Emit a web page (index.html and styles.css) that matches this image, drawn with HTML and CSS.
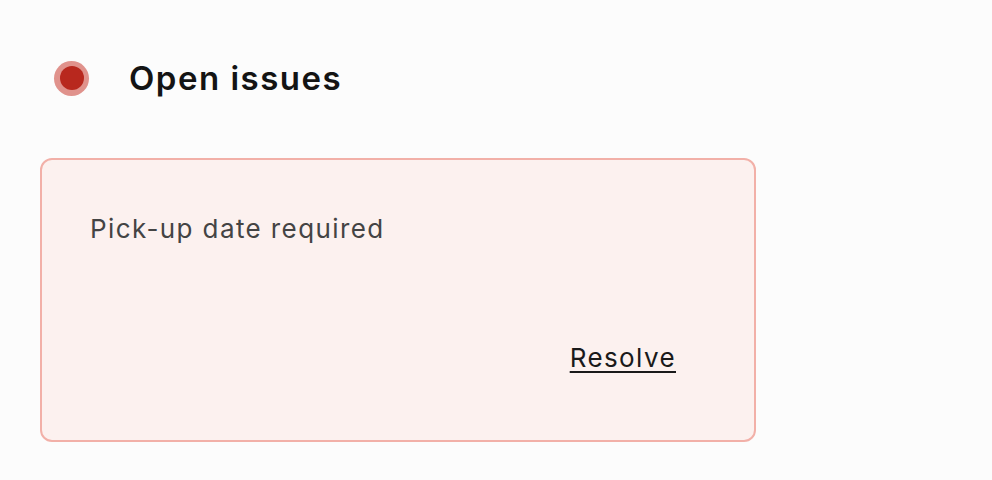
FILE: index.html
```html
<!DOCTYPE html>
<html>
<head>
<meta charset="utf-8">
<link rel="stylesheet" href="styles.css">
</head>
<body>
<div class="page">
  <div class="header">
    <span class="dot"><span class="dot-inner"></span></span>
    <h1 class="title">Open issues</h1>
  </div>
  <div class="card">
    <p class="issue">Pick-up date required</p>
    <div class="actions"><a class="resolve" href="#">Resolve</a></div>
  </div>
</div>
</body>
</html>
```
FILE: styles.css
```css
html, body {
  margin: 0;
  padding: 0;
  background: #fcfcfc;
  font-family: Inter, "Noto Sans", sans-serif;
}
.page {
  padding: 60px 40px 0 40px;
  width: 716px;
}
.header {
  display: flex;
  align-items: center;
  gap: 40px;
  padding-left: 14px;
  height: 36px;
}
.dot {
  width: 35px;
  height: 35px;
  border-radius: 50%;
  background: #e0928c;
  display: flex;
  align-items: center;
  justify-content: center;
  flex: none;
}
.dot-inner {
  width: 24px;
  height: 24px;
  border-radius: 50%;
  background: #b8281e;
}
.title {
  margin: 0;
  font-size: 33px;
  font-weight: 600;
  letter-spacing: 1.5px;
  color: #141414;
  line-height: 36px;
}
.card {
  margin-top: 62px;
  border: 2px solid #f2b0a8;
  background: #fcf1ef;
  border-radius: 12px;
  height: 284px;
  box-sizing: border-box;
  padding: 51px 78px 0 48px;
  display: flex;
  flex-direction: column;
}
.issue {
  margin: 0;
  font-size: 26px;
  letter-spacing: 1.4px;
  line-height: 36px;
  color: #444444;
}
.actions {
  margin-top: 93px;
  display: flex;
  justify-content: flex-end;
}
.resolve {
  font-size: 26px;
  letter-spacing: 1.4px;
  line-height: 36px;
  color: #1a1a1a;
  text-decoration: underline;
  text-underline-offset: 4px;
  text-decoration-thickness: 2px;
}
```
